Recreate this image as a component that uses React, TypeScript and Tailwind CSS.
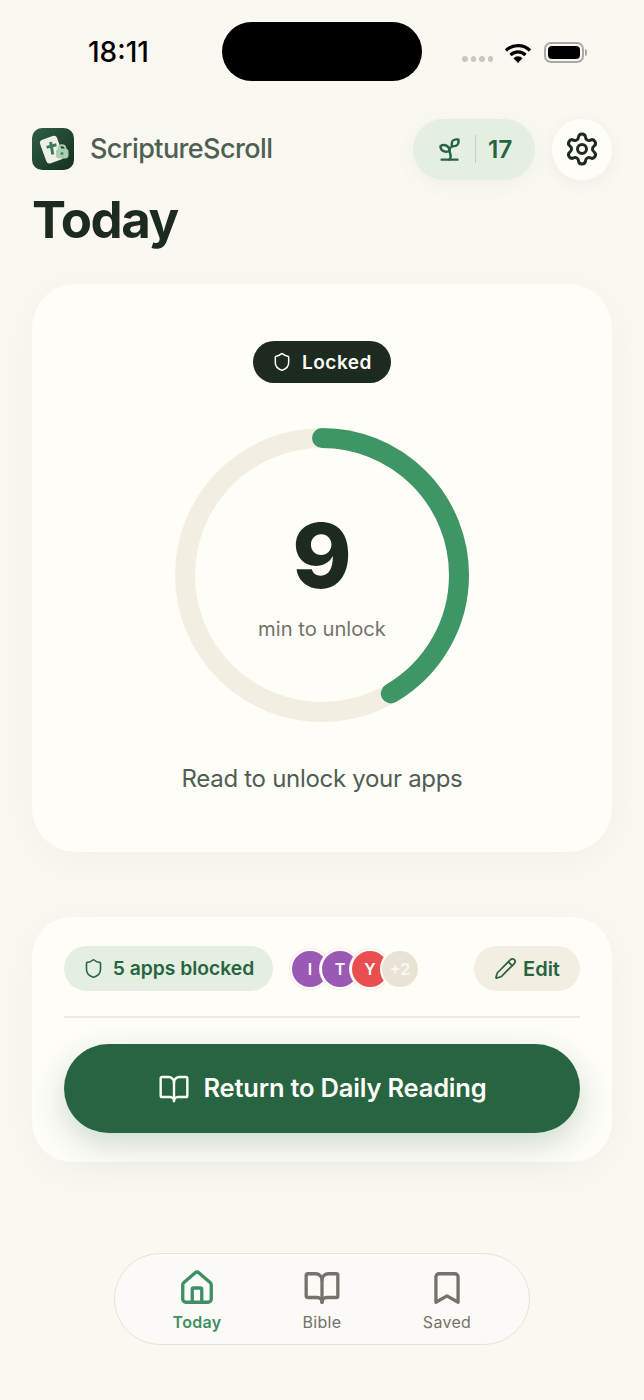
import React from 'react';
import { BookOpen, Bookmark, House, Pencil, Settings, Shield, Sprout } from 'lucide-react';

const font = { fontFamily: 'Inter, sans-serif' };

const AppLogo = () => (
  <svg width="42" height="42" viewBox="0 0 42 42">
    <defs>
      <linearGradient id="logoBg" x1="0" y1="0" x2="1" y2="1">
        <stop offset="0" stopColor="#2f5f45" />
        <stop offset="1" stopColor="#14301f" />
      </linearGradient>
    </defs>
    <rect width="42" height="42" rx="10" fill="url(#logoBg)" />
    <rect x="10.5" y="9" width="18" height="25" rx="3.5" transform="rotate(-20 20 21)" fill="#eef0e6" />
    <path d="M18.6 14l2.2 12.5M14.6 19.4l9.8-2.6" stroke="#3d7a58" strokeWidth="3" fill="none" />
    <path d="M26.5 21.5v-1.5a3.6 3.6 0 0 1 7 0v1.5" stroke="#a9cfae" strokeWidth="1.8" fill="none" />
    <rect x="24" y="20.5" width="12.5" height="10" rx="3.5" fill="#a9cfae" />
    <circle cx="30" cy="25.5" r="1.5" fill="#4d8463" />
  </svg>
);

const Ring = () => {
  const r = 137;
  const circ = 2 * Math.PI * r;
  return (
    <div className="relative mt-[45px] h-[294px] w-[294px]">
      <svg width="294" height="294" viewBox="0 0 294 294" className="-rotate-90">
        <circle cx="147" cy="147" r={r} fill="none" stroke="#f3eee2" strokeWidth="20" />
        <circle
          cx="147"
          cy="147"
          r={r}
          fill="none"
          stroke="#3e9666"
          strokeWidth="20"
          strokeLinecap="round"
          strokeDasharray={`${circ * 0.416} ${circ}`}
        />
      </svg>
      <div className="absolute inset-0 flex flex-col items-center">
        <span className="mt-[78px] text-[90px] leading-[100px] font-extrabold text-[#1c2a20]">9</span>
        <span className="mt-[9px] text-[20.2px] leading-[28px] text-[#74736b]">min to unlock</span>
      </div>
    </div>
  );
};

const avatars = [
  { label: 'I', bg: 'bg-[#9b59b6]' },
  { label: 'T', bg: 'bg-[#9b59b6]' },
  { label: 'Y', bg: 'bg-[#e94f4f]' },
];

const NavItem = ({ icon, label, active }: { icon: React.ReactNode; label: string; active?: boolean }) => (
  <div className={`flex w-[100px] flex-col items-center ${active ? 'text-[#3e8f63]' : 'text-[#74736b]'}`}>
    {icon}
    <span className={`mt-[5px] text-[16px] leading-[20px] tracking-[0.3px] ${active ? 'font-semibold' : 'font-normal'}`}>{label}</span>
  </div>
);

export default function App() {
  return (
    <div style={font} className="flex h-[1400px] w-[644px] flex-col overflow-hidden bg-[#fbf8f2] px-8">
      {/* status bar */}
      <div className="relative flex h-[118px] shrink-0 items-start">
        <span className="ml-[56px] mt-[36px] text-[28px] leading-[32px] font-[550] text-black">18:11</span>
        <div className="absolute left-[190px] top-[22px] h-[59px] w-[200px] rounded-full bg-black" />
        <div className="ml-auto mr-[25px] mt-[42px] flex items-start">
          <div className="mt-[14px] flex gap-[3px]">
            <span className="h-[5.5px] w-[5.5px] rounded-full bg-[#c9c7c2]" />
            <span className="h-[5.5px] w-[5.5px] rounded-full bg-[#c9c7c2]" />
            <span className="h-[5.5px] w-[5.5px] rounded-full bg-[#c9c7c2]" />
            <span className="h-[5.5px] w-[5.5px] rounded-full bg-[#c9c7c2]" />
          </div>
          <svg width="28" height="22" viewBox="0 0 28 22" className="ml-[11px]">
            <path d="M2 8.5a17 17 0 0 1 24 0M6.5 13a10.6 10.6 0 0 1 15 0" fill="none" stroke="#000" strokeWidth="3.2" />
            <path d="M9.5 16.2a6 6 0 0 1 9 0L14 21z" fill="#000" />
          </svg>
          <div className="ml-[12px] flex items-center">
            <div className="flex h-[21px] w-[40px] rounded-[7px] border-2 border-[#a9a8a4] p-[2px]">
              <div className="flex-1 rounded-[4px] bg-black" />
            </div>
            <div className="ml-[1px] h-[7px] w-[2px] rounded-r-full bg-[#a9a8a4]" />
          </div>
        </div>
      </div>

      {/* header */}
      <div className="flex h-[62px] shrink-0 items-center">
        <AppLogo />
        <span className="ml-[16px] mt-[1px] text-[27px] font-medium tracking-[-0.6px] text-[#4d6153]">ScriptureScroll</span>
        <div className="ml-auto flex h-[61px] w-[122px] items-center justify-center rounded-full bg-[#e4efe2] shadow-[0_4px_20px_rgba(38,100,66,0.06)]">
          <Sprout size={27} strokeWidth={2.2} className="text-[#266442]" />
          <span className="mx-[12px] h-[28px] w-[1.5px] bg-[#bcd4c0]" />
          <span className="text-[24.5px] font-semibold text-[#266442]">17</span>
        </div>
        <div className="ml-[17px] flex h-[61px] w-[60px] items-center justify-center rounded-full bg-[#fefdf8] shadow-[0_4px_20px_rgba(28,42,32,0.05)]">
          <Settings size={36} strokeWidth={2} className="text-[#1c2a20]" />
        </div>
      </div>

      <h1 className="mt-[10px] text-[51px] leading-[60px] font-bold tracking-[-1.4px] text-[#1c2a20]">Today</h1>

      {/* timer card */}
      <div className="mt-[34px] flex h-[568px] shrink-0 flex-col items-center rounded-[44px] bg-[#fefdf8] pt-[57px] shadow-[0_8px_40px_rgba(28,42,32,0.04)]">
        <div className="flex h-[42px] w-[138px] items-center justify-center gap-[10px] rounded-full bg-[#1c2a20] text-[#fefdf8]">
          <Shield size={20} strokeWidth={1.8} />
          <span className="mt-[3px] text-[19px] font-semibold tracking-[0.5px]">Locked</span>
        </div>
        <Ring />
        <p className="mt-[41px] text-[24px] leading-[32px] tracking-[-0.3px] text-[#4f5e53]">Read to unlock your apps</p>
      </div>

      {/* action card */}
      <div className="mt-[65px] flex h-[245px] shrink-0 flex-col rounded-[40px] bg-[#fefdf8] px-8 pt-[29px] shadow-[0_8px_40px_rgba(28,42,32,0.04)]">
        <div className="flex h-[45px] items-center">
          <div className="flex h-[45px] w-[209px] items-center justify-center gap-[9px] rounded-full bg-[#e4efe2] text-[#266442]">
            <Shield size={21} strokeWidth={1.8} />
            <span className="text-[19.3px] font-semibold">5 apps blocked</span>
          </div>
          <div className="ml-[17px] flex">
            {avatars.map((a) => (
              <div
                key={a.label}
                className={`-mr-[10px] flex h-[40px] w-[40px] items-center justify-center rounded-full border-2 border-[#fefdf8] text-[16px] font-semibold text-white shadow-[0_0_0_1px_#f6ebf0] ${a.bg}`}
              >
                {a.label}
              </div>
            ))}
            <div className="flex h-[40px] w-[40px] items-center justify-center rounded-full border-2 border-[#fefdf8] bg-[#e9e3d6] text-[16px] font-semibold text-[#fbf8f2]">
              +2
            </div>
          </div>
          <div className="ml-auto flex h-[45px] w-[106px] items-center justify-center gap-[6px] rounded-full bg-[#f3eee2] text-[#266442]">
            <Pencil size={23} strokeWidth={1.8} />
            <span className="text-[20px] font-semibold">Edit</span>
          </div>
        </div>
        <div className="mt-[25px] h-[2px] bg-[#efebe0]" />
        <div className="mt-[26px] flex h-[89px] items-center justify-center gap-[14px] rounded-full bg-[#266442] text-[#fefdf8] shadow-[0_12px_32px_rgba(38,100,66,0.22)]">
          <BookOpen size={32} strokeWidth={1.8} />
          <span className="text-[25.5px] font-semibold tracking-[-0.2px]">Return to Daily Reading</span>
        </div>
      </div>

      {/* tab bar */}
      <div className="mx-auto mt-[91px] flex h-[92px] w-[416px] shrink-0 items-center justify-center gap-[25px] rounded-full border border-[#e4e3dc] bg-[#fbfaf6] pt-[2px]">
        <NavItem active label="Today" icon={<House size={38} strokeWidth={2.1} />} />
        <NavItem label="Bible" icon={<BookOpen size={38} strokeWidth={2.1} />} />
        <NavItem label="Saved" icon={<Bookmark size={38} strokeWidth={2.1} />} />
      </div>
    </div>
  );
}
